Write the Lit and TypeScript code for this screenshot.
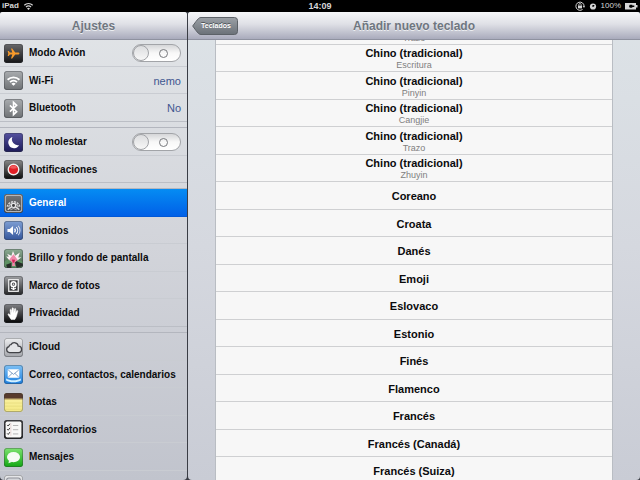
import { LitElement, html, svg, css, nothing, type TemplateResult } from "lit";
import { customElement, property } from "lit/decorators.js";
import { classMap } from "lit/directives/class-map.js";

interface Item {
  icon: string;
  label?: string;
  value?: string;
  toggle?: boolean;
  selected?: boolean;
}

const GROUPS: Item[][] = [
  [
    { icon: "plane", label: "Modo Avión", toggle: true },
    { icon: "wifi", label: "Wi-Fi", value: "nemo" },
    { icon: "bluetooth", label: "Bluetooth", value: "No" },
  ],
  [
    { icon: "moon", label: "No molestar", toggle: true },
    { icon: "notify", label: "Notificaciones" },
  ],
  [
    { icon: "gear", label: "General", selected: true },
    { icon: "sound", label: "Sonidos" },
    { icon: "flower", label: "Brillo y fondo de pantalla" },
    { icon: "frame", label: "Marco de fotos" },
    { icon: "hand", label: "Privacidad" },
  ],
  [
    { icon: "cloud", label: "iCloud" },
    { icon: "mail", label: "Correo, contactos, calendarios" },
    { icon: "notes", label: "Notas" },
    { icon: "reminders", label: "Recordatorios" },
    { icon: "messages", label: "Mensajes" },
    { icon: "camera" },
  ],
];

const KEYBOARDS: { name?: string; detail?: string }[] = [
  { detail: "Trazo" },
  { name: "Chino (tradicional)", detail: "Escritura" },
  { name: "Chino (tradicional)", detail: "Pinyin" },
  { name: "Chino (tradicional)", detail: "Cangjie" },
  { name: "Chino (tradicional)", detail: "Trazo" },
  { name: "Chino (tradicional)", detail: "Zhuyin" },
  { name: "Coreano" },
  { name: "Croata" },
  { name: "Danés" },
  { name: "Emoji" },
  { name: "Eslovaco" },
  { name: "Estonio" },
  { name: "Finés" },
  { name: "Flamenco" },
  { name: "Francés" },
  { name: "Francés (Canadá)" },
  { name: "Francés (Suiza)" },
];

// top colour, bottom colour and artwork of each 18 x 18 icon
const ICONS: Record<string, [string, string, TemplateResult]> = {
  plane: ["#6a6a6c", "#151516", svg`
    <path d="M14.6 9c0-.6-.6-1-1.400-1H10.600L7.800 4.200H6.600L7.900 8H5.600L4.500 6.700H3.500L4.100 9l-.6 2.300h1L5.600 10h2.300l-1.300 3.800h1.200L10.600 10h2.600c.8 0 1.400-.4 1.400-1z" fill="#f79a2b"/>`],
  wifi: ["#a9acaf", "#6f7275", svg`
    <g fill="none" stroke="#fff" stroke-width="1.700">
      <path d="M3.400 8.300a8 8 0 0 1 11.200 0"/><path d="M5.700 10.600a4.700 4.700 0 0 1 6.600 0"/>
    </g><path d="M9 14l-2-2a2.900 2.900 0 0 1 4 0z" fill="#fff"/>`],
  bluetooth: ["#a9acaf", "#6f7275", svg`
    <path d="M5.600 6l6.400 6-3 2.800V3.200L12 6l-6.400 6" fill="none" stroke="#fff" stroke-width="1.500"/>`],
  moon: ["#5552a0", "#1c1a58", svg`
    <path d="M8 3.800a5.400 5.400 0 1 0 6.300 7.600A5.500 5.500 0 0 1 8 3.800z" fill="#fff"/>`],
  notify: ["#8a8a8a", "#0c0c0c", svg`
    <circle cx="9" cy="9" r="5" fill="#e11f26" stroke="#f3eeee" stroke-width="1.300"/>
    <path d="M5.600 7.500a3.700 3.700 0 0 1 6.800 0q-3.400 1.500-6.800 0z" fill="#ee5a5c"/>`],
  gear: ["#77787a", "#47484a", svg`
    <rect x="1.200" y="1.200" width="15.600" height="15.600" rx="2" fill="none" stroke="#b5b5b7" stroke-width="1.200"/>
    <path d="M3 12a6.200 6.200 0 0 1 12 0" fill="none" stroke="#d9d9db" stroke-width="1.300" stroke-dasharray="2 .8"/>
    <path d="M4.400 12.500a4.800 4.800 0 0 1 9.200 0" fill="none" stroke="#b9babc" stroke-width="1.300"/>
    <circle cx="9" cy="10.800" r="2" fill="#3a3b3d" stroke="#e6e6e8" stroke-width="1.200"/>
    <path d="M3.500 14.800l4-2.800M14.500 14.800l-4-2.800" stroke="#dedee0" stroke-width="1.300"/>
    <path d="M6 15.200l3-1.600 3 1.600" fill="none" stroke="#a5a6a8"/>`],
  sound: ["#7f9fd4", "#34569c", svg`
    <path d="M3.300 7.500h2.100L8.600 4.800v8.400l-3.200-2.700H3.300z" fill="#fff"/>
    <g fill="none" stroke="#fff"><path d="M10 7.300a2.600 2.600 0 0 1 0 3.400" stroke-width="1.200"/><path d="M11.700 5.800a4.700 4.700 0 0 1 0 6.400"/><path d="M13.400 4.500a6.600 6.600 0 0 1 0 9" stroke-opacity=".75"/></g>`],
  flower: ["#8fae95", "#36523b", svg`
    <path d="M0 12l5-3 4 5 5-4 4 2v4l-3 2H3l-3-2z" fill="#5e9063"/><path d="M10 11l8 3v2l-6 2zM2 15l5-2v5H3z" fill="#262d28"/>
    <path d="M3 4.500l4 2L8.500 2l2 4.500L15 3.300 13.500 8l3-.3-3.500 3H5L2 7l2.600.4z" fill="#fbf0f4"/>
    <path d="M6.500 8l2.500-3 2.300 3 1.700 2.500-3 2.500 .5 3H7.600L8 13l-3-2.700z" fill="#ee89a9"/><path d="M7.500 10l3 .3-.8 2.700H8.300z" fill="#d42458"/>`],
  frame: ["#a0a1a4", "#242527", svg`
    <rect x="4.500" y="3.500" width="9" height="11" fill="#37383b" stroke="#efeff0" stroke-width="1.200"/>
    <circle cx="9" cy="7.700" r="2.300" fill="#55565a" stroke="#fff" stroke-width="1.400"/><circle cx="9" cy="7.700" r=".7" fill="#fff"/>
    <path d="M9 10v3.200M9 12.800L6.700 11.400M9 12.800l2.300-1.400" stroke="#fff" stroke-width="1.100"/>`],
  hand: ["#818286", "#050506", svg`
    <path d="M6.700 14.600L3.900 10.300q-.4-1 .5-1.100l1.800 1.200-.5-5q.5-1 1.200 0l.7 3.200V4q.6-.9 1.300 0l.3 4.500.8-4q.7-.7 1.200.1l-.3 4.500 1.100-2.800q.8-.5 1.100.3l-1.300 5.100-1.500 2.900z" fill="#fff" stroke="#fff" stroke-width=".5"/>`],
  cloud: ["#eeeff1", "#a3a5ab", svg`
    <path d="M5.200 13.800a2.900 2.900 0 0 1-.5-5.700 2 2 0 0 1 1.900-1.800 3.700 3.700 0 0 1 6.900 1.500 3 3 0 0 1 .2 6z" fill="#e4e5e8" stroke="#414247" stroke-width="1.200"/>`],
  mail: ["#7ec1f5", "#1d7fe0", svg`
    <rect x="3.500" y="4" width="11" height="8" rx=".8" fill="#fff"/>
    <path d="M4 4.700l5 4.200 5-4.200M4 11.500l3.700-3.600M14 11.500l-3.700-3.600" fill="none" stroke="#7c9cc3" stroke-width=".9"/>
    <path d="M2 12.800c3.500 2.300 10.500 2.300 14 0v1.800c-3 2.200-11 2.200-14 0z" fill="#d2f0ff"/>`],
  notes: ["#fbf3a8", "#f4e984", svg`
    <path d="M0 0h18v5.500H0z" fill="#583b2d"/><path d="M0 5.500h18v1H0z" fill="#c3ac69"/>
    <path d="M1 9.500h16M1 12.500h16M1 15.500h16" stroke="#e2d878" stroke-width=".6"/>`],
  reminders: ["#3b3b3d", "#1a1a1b", svg`
    <rect x="1.500" y="1.500" width="15" height="15" rx="1.500" fill="#f8f8f7"/>
    <path d="M3 4.700l1 1 1.600-2.200M3 8.700l1 1 1.600-2.200M3 12.700l1 1 1.600-2.200" fill="none" stroke="#333" stroke-width=".9"/>
    <path d="M6.500 3v12" stroke="#d9b9b9" stroke-width=".5"/><path d="M8.500 5.200h5M8.500 9.200h5M8.500 13.200h5" stroke="#a9a9a9" stroke-width=".8"/>`],
  messages: ["#7fe372", "#12a712", svg`
    <ellipse cx="9" cy="8.600" rx="6.200" ry="4.800" fill="#f6fbf5"/><path d="M5 11l-.8 3.500 4.300-1.700z" fill="#eef8ec"/>`],
  camera: ["#e8e9eb", "#b9bbc0", svg`
    <rect x="2.500" y="2.800" width="13" height="10" rx="2" fill="#d3d5d9" stroke="#90929a"/>`],
};

@customElement("item-icon")
class ItemIcon extends LitElement {
  @property() name = "";

  static styles = css`
    :host { display: block; flex: none; width: 19px; height: 19px; }
    .tile { display: block; width: 100%; height: 100%; }
  `;

  render() {
    const [top, bottom, art] = ICONS[this.name] ?? ICONS.cloud;
    return html`<svg class="tile" viewBox="0 0 18 18" aria-hidden="true">
      <defs>
        <linearGradient id="g" x2="0" y2="1"><stop stop-color=${top} /><stop offset="1" stop-color=${bottom} /></linearGradient>
        <clipPath id="c"><rect width="18" height="18" rx="2.600" /></clipPath>
      </defs>
      <g clip-path="url(#c)"><rect width="18" height="18" fill="url(#g)" />${art}</g>
      <rect x=".4" y=".4" width="17.200" height="17.200" rx="2.400" fill="none" stroke="#34363c" stroke-opacity=".45" stroke-width=".8" />
    </svg>`;
  }
}

@customElement("status-bar")
class StatusBar extends LitElement {
  static styles = css`
    :host {
      display: grid; grid-template-columns: 1fr auto 1fr; align-items: center;
      height: 12px; padding: 0 2px; background: #000; color: #d6d6d6;
      font-size: 8px; line-height: 12px;
    }
    .device, .status { display: flex; align-items: center; gap: 4px; }
    .device { font-weight: bold; }
    .status { justify-content: flex-end; }
    .clock { font-size: 9px; font-weight: bold; }
    .glyph { display: block; height: 10px; }
  `;

  render() {
    return html`
      <div class="device">
        iPad
        <svg class="glyph" width="11" height="10" viewBox="0 0 10 10" role="img" aria-label="Wi-Fi">
          <g fill="none" stroke="#d6d6d6" stroke-width="1.200"><path d="M.8 4.200a6 6 0 0 1 8.400 0" /><path d="M2.500 6a3.600 3.600 0 0 1 5 0" /></g>
          <path d="M5 9L3.500 7.500a2.100 2.100 0 0 1 3 0z" fill="#d6d6d6" />
        </svg>
      </div>
      <time class="clock">14:09</time>
      <div class="status">
        <svg class="glyph" width="10" height="10" viewBox="0 0 10 10" role="img" aria-label="Bloqueo de rotación">
          <path d="M7.600 8.400A4.100 4.100 0 1 1 9.100 5" fill="none" stroke="#d6d6d6" />
          <path d="M7.700 5h2.300L9 7z" fill="#d6d6d6" />
          <rect x="3" y="4.600" width="4" height="2.800" fill="#d6d6d6" />
          <path d="M3.800 4.800V3.700a1.200 1.200 0 0 1 2.400 0v1.100" fill="none" stroke="#d6d6d6" stroke-width=".8" />
        </svg>
        <svg class="glyph" width="8" height="10" viewBox="0 0 8 10" role="img" aria-label="Alarma">
          <circle cx="4" cy="5.500" r="3.100" fill="#d6d6d6" /><path d="M4 6V4.600H5.300" fill="none" stroke="#000" stroke-width="1.100" />
        </svg>
        <span>100%</span>
        <svg class="glyph" width="13" height="10" viewBox="0 0 13 10" role="img" aria-label="Batería">
          <rect x="0" y="2" width="11" height="6.500" fill="#d6d6d6" /><rect x="11" y="4" width="1.500" height="2.500" fill="#d6d6d6" />
          <path d="M1.500 5.200H4l.8-1.500h2.500v.8h2v1.400h-2v.8H4.800L4 5.200z" fill="#000" />
        </svg>
      </div>
    `;
  }
}

@customElement("settings-sidebar")
class SettingsSidebar extends LitElement {
  static styles = css`
    :host {
      display: flex; flex-direction: column; min-width: 0; overflow: hidden;
      border-radius: 3px 3px 4px 4px; color: #0b0b0d;
      background: linear-gradient(#e2e5e8, #d2d4da 50%, #c1c4cd);
    }
    .bar {
      flex: none; display: grid; place-items: center; height: 28px; box-sizing: border-box; z-index: 1;
      background: linear-gradient(#f6f7f9, #dfe0e6 45%, #a9abbc); border-bottom: 1px solid #8f92a0;
    }
    .title { margin: 0; font-size: 12px; line-height: 16px; color: #6f7680; text-shadow: 0 1px #eceef1; }
    .groups { display: flex; flex-direction: column; gap: 6px; margin-top: -1px; min-height: 0; }
    .group {
      list-style: none; margin: 0; padding: 0;
      display: grid; grid-auto-rows: 28px 27px;
    }
    .group + .group { box-shadow: 0 -1px #b3b6be; }
    .entry {
      display: flex; align-items: center; gap: 6px; box-sizing: border-box; padding: 1px 6px 0 4px;
      border-bottom: 1px solid #c9ccd2; font-size: 10px; line-height: 14px; font-weight: bold;
    }
    .entry:last-child { border-bottom-color: #bbbec5; }
    .selected { background: linear-gradient(#058cf3, #0160e7); border-bottom-color: #0158d8; color: #fff; }
    .link { flex: 1; display: flex; align-items: center; gap: 6px; color: inherit; text-decoration: none; white-space: nowrap; }
    .label { flex: 1; white-space: nowrap; }
    .value { color: #3f5690; font-size: 11px; font-weight: normal; }
    .switch {
      appearance: none; flex: none; display: flex; align-items: center; justify-content: space-between;
      width: 49px; height: 18px; margin: 0; padding: 0 12px 0 0; box-sizing: border-box;
      border: 1px solid #a2a4a8; border-radius: 9px;
      background: linear-gradient(#d5d6d8, #f8f8f8 50%, #fff);
    }
    .switch::before {
      content: ""; width: 16px; height: 16px; box-sizing: border-box; border: 1px solid #a0a2a6; border-radius: 50%;
      background: linear-gradient(#dcdddf, #f7f7f7);
    }
    .switch::after {
      content: ""; width: 9px; height: 9px; box-sizing: border-box; border: 1px solid #77797d; border-radius: 50%;
    }
  `;

  private entry(item: Item) {
    const id = `switch-${item.icon}`;
    return html`<li class=${classMap({ entry: true, selected: !!item.selected })}>
      ${item.toggle
        ? html`<item-icon name=${item.icon}></item-icon>
            <label class="label" for=${id}>${item.label}</label>
            <input class="switch" id=${id} type="checkbox" role="switch" />`
        : html`<a class="link" href="#${item.icon}" aria-current=${item.selected ? "page" : nothing}>
            <item-icon name=${item.icon}></item-icon>
            ${item.label ? html`<span class="label">${item.label}</span>` : nothing}
            ${item.value ? html`<span class="value">${item.value}</span>` : nothing}
          </a>`}
    </li>`;
  }

  render() {
    return html`
      <header class="bar"><h1 class="title">Ajustes</h1></header>
      <nav class="groups">
        ${GROUPS.map((group) => html`<ul class="group">${group.map((item) => this.entry(item))}</ul>`)}
      </nav>
    `;
  }
}

@customElement("keyboard-pane")
class KeyboardPane extends LitElement {
  static styles = css`
    :host {
      display: flex; flex-direction: column; min-width: 0; overflow: hidden;
      border-radius: 3px 3px 4px 4px;
      background: linear-gradient(#dde3e7, #d5d8df 50%, #c9ccd5);
    }
    .bar {
      flex: none; display: grid; grid-template-columns: 1fr auto 1fr; align-items: center;
      height: 28px; box-sizing: border-box; padding: 0 4px; z-index: 1;
      background: linear-gradient(#f6f7f9, #dfe0e6 45%, #a9abbc); border-bottom: 1px solid #8f92a0;
    }
    .title { margin: 0; font-size: 12px; line-height: 16px; color: #6f7680; text-shadow: 0 1px #eceef1; }
    .back {
      position: relative; justify-self: start; width: 46px; height: 18px; margin: 0; padding: 0 0 0 2px;
      border: 0; background: none; color: #fff; font: bold 7px/18px "Liberation Sans", Arial, sans-serif;
      text-align: center; text-shadow: 0 -1px #4d5359;
    }
    .shape { position: absolute; inset: 0; }
    .text { position: relative; }
    .list {
      list-style: none; margin: -23px 27px 0; padding: 0; min-height: 0;
      display: grid; grid-auto-rows: 28px 27px; background: #f7f7f7;
      border: solid #b9bdc3; border-width: 0 1px;
    }
    .row { display: grid; box-sizing: border-box; border-bottom: 1px solid #cfd0d2; }
    .choice {
      display: flex; flex-direction: column; align-items: center; justify-content: center;
      min-width: 0; margin: 0; padding: 1px 0 0; border: 0; background: none; color: #0b0b0d;
      font-family: inherit; font-size: 11px; line-height: 14px; font-weight: bold;
    }
    .partial { justify-content: flex-end; }
    .detail { font-size: 9px; line-height: 11px; font-weight: normal; color: #808080; }
  `;

  render() {
    return html`
      <header class="bar">
        <button class="back" type="button">
          <svg class="shape" width="46" height="18" viewBox="0 0 46 18" aria-hidden="true">
            <defs><linearGradient id="b" x2="0" y2="1"><stop stop-color="#9ba0a6" /><stop offset="1" stop-color="#6b7178" /></linearGradient></defs>
            <path d="M.7 9Q4.500 3.500 6.500 1.500 7.500.5 9 .5H42.500a3 3 0 0 1 3 3v11a3 3 0 0 1-3 3H9q-1.500 0-2.500-1Q4.500 14.500.7 9z" fill="url(#b)" stroke="#5c6167" />
          </svg>
          <span class="text">Teclados</span>
        </button>
        <h2 class="title">Añadir nuevo teclado</h2>
      </header>
      <ul class="list">
        ${KEYBOARDS.map(({ name, detail }) => html`<li class="row">
          <button class=${classMap({ choice: true, partial: !name })} type="button">
            ${name ? html`<span>${name}</span>` : nothing}
            ${detail ? html`<span class="detail">${detail}</span>` : nothing}
          </button>
        </li>`)}
      </ul>
    `;
  }
}

@customElement("app-root")
class AppRoot extends LitElement {
  static styles = css`
    :host {
      display: grid; grid-template-rows: auto minmax(0, 1fr); height: 100vh; overflow: hidden;
      background: #000; font-family: "Liberation Sans", Arial, Helvetica, sans-serif;
    }
    .panes {
      display: grid; grid-template-columns: 187px minmax(0, 1fr); grid-template-rows: minmax(0, 1fr);
      gap: 1px; background: #3a3d45;
    }
  `;

  render() {
    return html`
      <status-bar></status-bar>
      <main class="panes">
        <settings-sidebar></settings-sidebar>
        <keyboard-pane></keyboard-pane>
      </main>
    `;
  }
}
